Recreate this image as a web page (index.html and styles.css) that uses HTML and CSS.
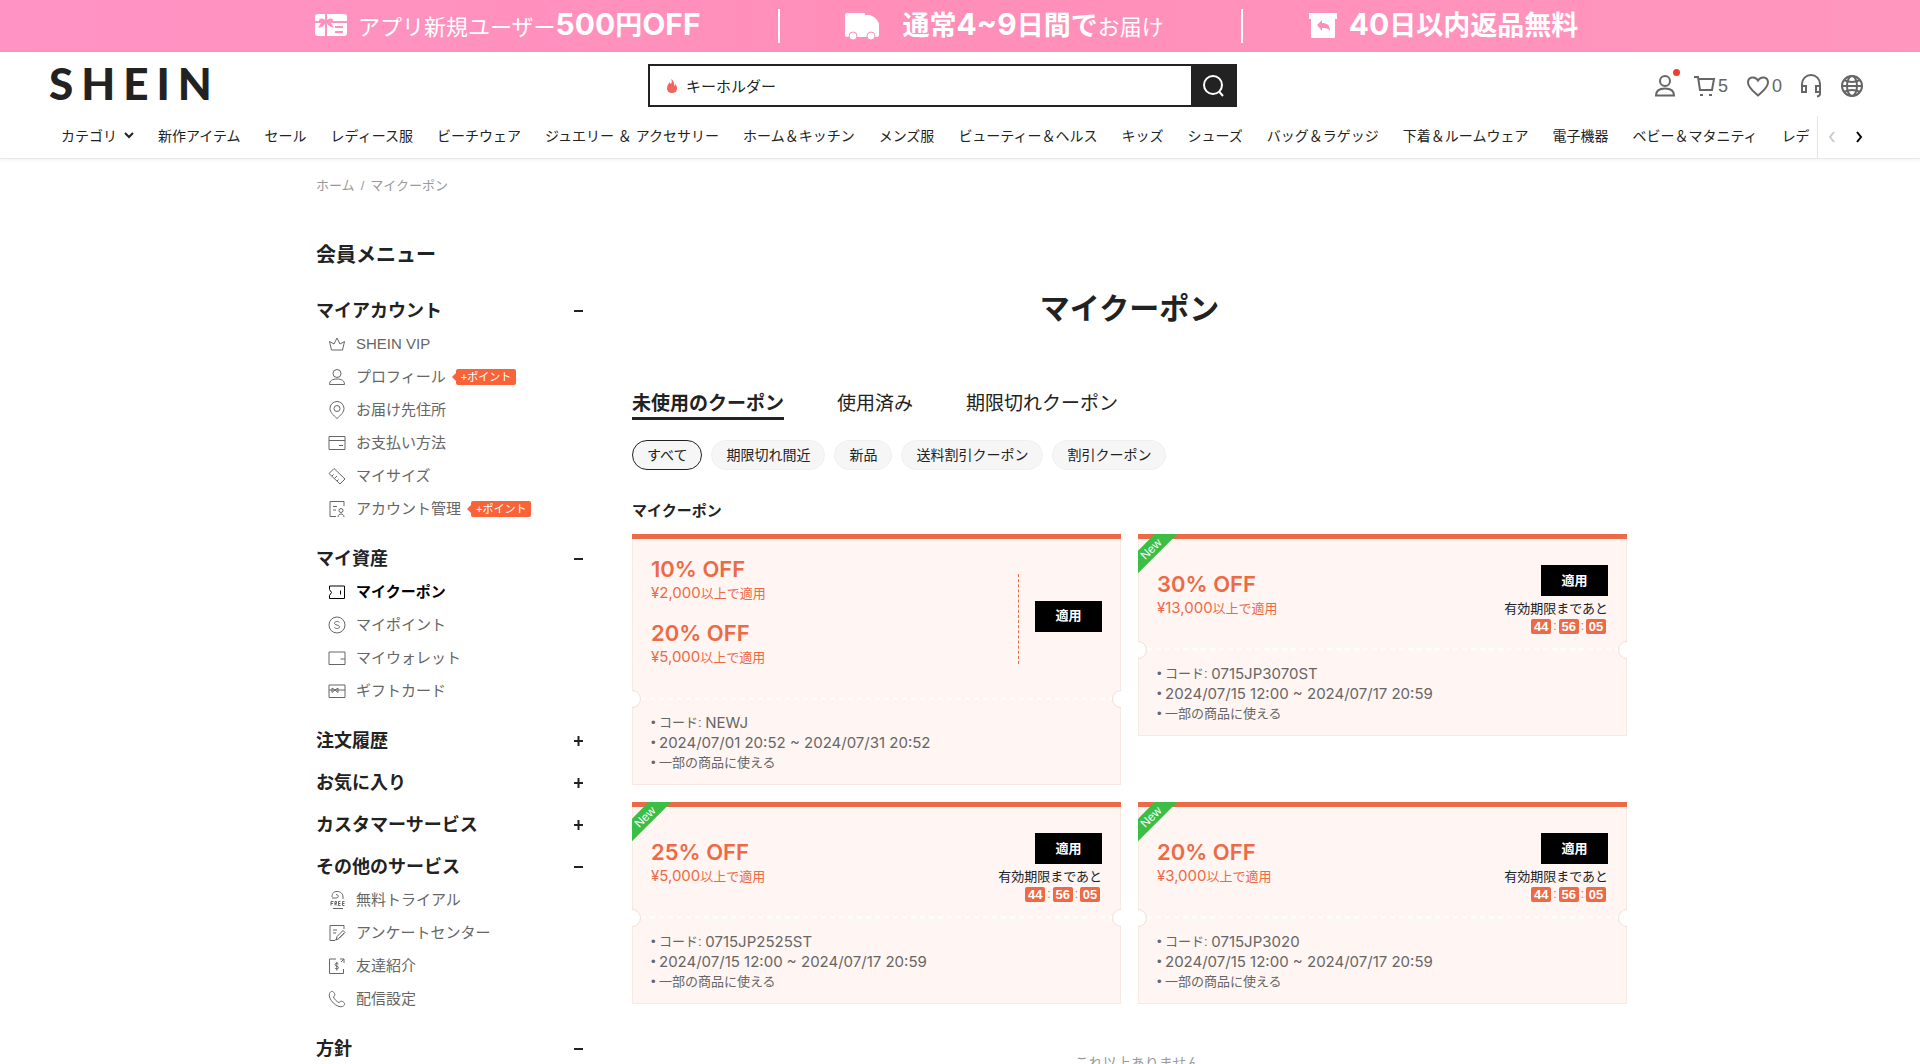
FILE: index.html
```html
<!DOCTYPE html>
<html lang="ja">
<head>
<meta charset="utf-8">
<title>マイクーポン | SHEIN</title>
<link rel="stylesheet" href="styles.css">
</head>
<body>
<div class="promo">
  <a class="promo-item" href="#">
    <svg class="promo-gift" width="32" height="24" viewBox="0 0 32 24" fill="#fff"><path d="M3 0h7v6C7 4 4 4 4 7H0V3a3 3 0 0 1 3-3zM12 0h17a3 3 0 0 1 3 3v4H18c0-3-3-3-6-1zM0 9h6l-3 5 4-1 3-3v12H3a3 3 0 0 1-3-3zM12 10l4 3 3 1-3-5h16v10a3 3 0 0 1-3 3H12z"/><path d="M20 13h8M20 18h8" stroke="#ff8fba" stroke-width="2"/></svg>
    <span class="promo-thin">アプリ新規ユーザー<b><span class="num">500</span>円<span class="num">OFF</span></b></span>
  </a>
  <i class="promo-line"></i>
  <a class="promo-item promo-wide" href="#">
    <svg width="34" height="28" viewBox="0 0 34 28" fill="#fff"><path d="M2 1h17a1 1 0 0 1 1 1v1h5c5 2 8 5 9 9v11a2 2 0 0 1-2 2H2a2 2 0 0 1-2-2V3a2 2 0 0 1 2-2z"/><circle cx="8" cy="24" r="4" stroke="#ff8fba" stroke-width="1"/><circle cx="26" cy="24" r="4" stroke="#ff8fba" stroke-width="1"/></svg>
    <span class="promo-thin"><b>通常<span class="num">4~9</span>日間で</b>お届け</span>
  </a>
  <i class="promo-line"></i>
  <a class="promo-item" href="#">
    <svg width="30" height="26" viewBox="0 0 30 26" fill="#fff"><path d="M1 0h28v6h-2v18a1 1 0 0 1-1 1H4a1 1 0 0 1-1-1V6H1z"/><path d="M9 12l5-5v3c5 0 8 2 8 8-2-3-4-3-8-3v3z" fill="#ff8fba"/></svg>
    <span class="promo-thin"><b><span class="num">40</span>日以内返品無料</b></span>
  </a>
</div>

<header class="header">
  <div class="header-top">
    <a class="logo" href="#">SHEIN</a>
    <form class="search">
      <svg width="12" height="16" viewBox="0 0 12 16"><path d="M5 1c1 2 1 3 0 5-.6-.4-1-1-1-2C2 6 1 8 1 10.500 1 13.500 3.200 15 6 15s5-1.500 5-4.500c0-2.300-1-3.500-1.800-4.500-.1 1-.5 1.600-1.200 2C8.500 5 7.500 2.500 5 1z" fill="#f36461"/></svg>
      <input class="search-input" type="text" aria-label="検索" value="キーホルダー">
      <button class="search-button" type="button" aria-label="検索する"><svg width="24" height="24" viewBox="0 0 24 24" fill="none" stroke="#fff" stroke-width="2"><circle cx="12" cy="11" r="9"/><path d="M18 17.500l4 4.500"/></svg></button>
    </form>
    <div class="tools">
      <a class="tool tool-user" href="#" aria-label="アカウント"><svg width="22" height="24" viewBox="0 0 22 24" fill="none" stroke="#666" stroke-width="2"><circle cx="11" cy="7" r="5"/><path d="M2 21.500c0-5 4-7 9-7s9 2 9 7z"/></svg><i class="dot"></i></a>
      <a class="tool tool-cart" href="#" aria-label="カート"><svg width="22" height="24" viewBox="0 0 22 24" fill="none" stroke="#666" stroke-width="2"><path d="M0 3h4l2 13h12l2-11H4.500"/><path d="M6 20h3v2H6zM15 20h3v2h-3z" fill="#666" stroke="none"/></svg><span>5</span></a>
      <a class="tool tool-wish" href="#" aria-label="お気に入り"><svg width="24" height="24" viewBox="0 0 24 24" fill="none" stroke="#666" stroke-width="2"><path d="M12 21.500C8 18 2 13.500 2 8.500 2 3 9 1.500 12 6.500c3-5 10-3.500 10 2 0 5-6 9.500-10 13z"/></svg><span>0</span></a>
      <a class="tool tool-help" href="#" aria-label="サポート"><svg width="22" height="24" viewBox="0 0 22 24" fill="none" stroke="#666" stroke-width="2"><path d="M2 17V10a9 9 0 0 1 18 0v7"/><path d="M2 12h4v6H2zM16 12h4v6h-4zM20 17v3q0 2-3 2.500"/></svg></a>
      <a class="tool" href="#" aria-label="言語"><svg width="24" height="24" viewBox="0 0 24 24" fill="none" stroke="#666" stroke-width="2"><circle cx="12" cy="12" r="10"/><ellipse cx="12" cy="12" rx="5" ry="10"/><path d="M2 12h20M4 6q8 4 16 0M4 18q8-4 16 0"/></svg></a>
    </div>
  </div>
  <nav class="nav">
    <div class="nav-list">
      <a href="#">カテゴリ<svg class="nav-caret" width="10" height="7" viewBox="0 0 10 7" fill="none" stroke="#222" stroke-width="2"><path d="M1 1l4 4 4-4"/></svg></a>
      <a href="#">新作アイテム</a><a href="#">セール</a><a href="#">レディース服</a><a href="#">ビーチウェア</a><a href="#">ジュエリー ＆ アクセサリー</a><a href="#">ホーム＆キッチン</a><a href="#">メンズ服</a><a href="#">ビューティー＆ヘルス</a><a href="#">キッズ</a><a href="#">シューズ</a><a href="#">バッグ＆ラゲッジ</a><a href="#">下着＆ルームウェア</a><a href="#">電子機器</a><a href="#">ベビー＆マタニティ</a><a href="#">レデ</a>
    </div>
    <div class="nav-arrows">
      <button type="button" aria-label="前へ"><svg width="8" height="12" viewBox="0 0 8 12" fill="none" stroke="#ccc" stroke-width="2"><path d="M6 1L2 6l4 5"/></svg></button>
      <button type="button" aria-label="次へ"><svg width="8" height="12" viewBox="0 0 8 12" fill="none" stroke="#000" stroke-width="2"><path d="M2 1l4 5-4 5"/></svg></button>
    </div>
  </nav>
</header>

<div class="page">
  <nav class="crumbs"><a href="#">ホーム</a><span>/</span><span>マイクーポン</span></nav>
  <div class="columns">
    <aside class="side">
      <h2 class="side-title">会員メニュー</h2>

      <section class="group">
        <button class="group-head" type="button">マイアカウント<svg width="10" height="10" viewBox="0 0 10 10" stroke="#222" stroke-width="2"><path d="M0 5h9"/></svg></button>
        <ul>
          <li><a href="#"><svg class="ico" viewBox="0 0 18 18"><path d="M3.500 15L1.500 6.500 6 9l3-6 3 6 4.500-2.500L14.500 15z"/></svg>SHEIN VIP</a></li>
          <li><a href="#"><svg class="ico" viewBox="0 0 18 18"><circle cx="9" cy="5.500" r="4"/><path d="M1.500 16.500c0-4 3-5.500 7.500-5.500s7.500 1.500 7.500 5.500z"/></svg>プロフィール</a><span class="tag">+ポイント</span></li>
          <li><a href="#"><svg class="ico" viewBox="0 0 18 18"><path d="M9 17.500C5 14 2 11 2 7.500a7 7 0 0 1 14 0C16 11 13 14 9 17.500z"/><circle cx="9" cy="7.500" r="3"/></svg>お届け先住所</a></li>
          <li><a href="#"><svg class="ico" viewBox="0 0 18 18"><path d="M1 2.500h16v13H1zM1 6.500h16M11 11.500h4"/></svg>お支払い方法</a></li>
          <li><a href="#"><svg class="ico" viewBox="0 0 18 18"><path d="M6 1.500L17 12l-5 5L1 6.500zM4 9l1.500-1.500M6.500 11.500L9 9M9 14l1.500-1.500"/></svg>マイサイズ</a></li>
          <li><a href="#"><svg class="ico" viewBox="0 0 18 18"><path d="M16 6V1.500H2v15h6M5 6.500h4M5 10h3"/><circle cx="13" cy="10.500" r="2"/><path d="M10 17c0-4 6-4 6 0"/></svg>アカウント管理</a><span class="tag">+ポイント</span></li>
        </ul>
      </section>

      <section class="group">
        <button class="group-head" type="button">マイ資産<svg width="10" height="10" viewBox="0 0 10 10" stroke="#222" stroke-width="2"><path d="M0 5h9"/></svg></button>
        <ul>
          <li><a class="current" href="#"><svg class="ico" viewBox="0 0 18 18"><path d="M1.500 3h15v12.500h-15v-3l2-3-2-3zM12.500 7.500v4"/></svg>マイクーポン</a></li>
          <li><a href="#"><svg class="ico" viewBox="0 0 18 18"><circle cx="9" cy="9" r="8"/><path d="M11.500 6.500C10.500 5 6.500 5 6.500 7.300c0 2.200 5 1.200 5 3.500 0 2.200-4 2.200-5.200.5"/></svg>マイポイント</a></li>
          <li><a href="#"><svg class="ico" viewBox="0 0 18 18"><path d="M1 3h16v12.500H1zM12.500 10H17"/></svg>マイウォレット</a></li>
          <li><a href="#"><svg class="ico" viewBox="0 0 18 18"><path d="M1 3h16v12.500H1zM1 8h16M4 6l3 2-3 2.500zM10 6L7 8l3 2.500z"/></svg>ギフトカード</a></li>
        </ul>
      </section>

      <section class="group"><button class="group-head" type="button">注文履歴<svg width="10" height="10" viewBox="0 0 10 10" stroke="#222" stroke-width="2"><path d="M0 5h9M4.500 0v10"/></svg></button></section>
      <section class="group"><button class="group-head" type="button">お気に入り<svg width="10" height="10" viewBox="0 0 10 10" stroke="#222" stroke-width="2"><path d="M0 5h9M4.500 0v10"/></svg></button></section>
      <section class="group"><button class="group-head" type="button">カスタマーサービス<svg width="10" height="10" viewBox="0 0 10 10" stroke="#222" stroke-width="2"><path d="M0 5h9M4.500 0v10"/></svg></button></section>

      <section class="group">
        <button class="group-head" type="button">その他のサービス<svg width="10" height="10" viewBox="0 0 10 10" stroke="#222" stroke-width="2"><path d="M0 5h9"/></svg></button>
        <ul>
          <li><a href="#"><svg class="ico" viewBox="0 0 18 18"><path d="M4 6C4 2 6 .5 9 .5c4 0 6 2.500 6 5.500v2M4 7h4c3 0 3-3.500 0-3.500M5 17.500h10M3 14.500v-4h2.500M3 12.500h2M7 14.500v-4h1.500v2H7l2 2M12.500 10.500h-2v4h2M10.500 12.500h2M16.500 10.500h-2v4h2M14.500 12.500h2"/></svg>無料トライアル</a></li>
          <li><a href="#"><svg class="ico" viewBox="0 0 18 18"><path d="M16 5V1.500H2v15h5l2-2M5 6h4M5 9h3M8 16l1-3.500 6-6 2 2-6 6zM11 14l5-5"/></svg>アンケートセンター</a></li>
          <li><a href="#"><svg class="ico" viewBox="0 0 18 18"><path d="M8 2H1.500v14.500h14V12M12 2h4v4M16 2l-3 3M10.500 7C9.500 5.800 7 6 7 7.700c0 1.800 3.500 1 3.500 2.900 0 1.700-2.800 1.700-3.700.4M8.800 5v8.500"/></svg>友達紹介</a></li>
          <li><a href="#"><svg class="ico" viewBox="0 0 18 18"><path d="M1.500 3.500C3 .5 5 .8 6.500 3.500c1 2-.5 2.500-1 3.500C6 9 9 12 11 12.500c1-.5 1.500-2 3.500-1 2.700 1.500 3 3.500 0 5C9 18.500-.5 9 1.500 3.500z"/></svg>配信設定</a></li>
        </ul>
      </section>

      <section class="group"><button class="group-head" type="button">方針<svg width="10" height="10" viewBox="0 0 10 10" stroke="#222" stroke-width="2"><path d="M0 5h9"/></svg></button></section>
    </aside>

    <main class="main">
      <h1>マイクーポン</h1>
      <div class="tabs">
        <button class="tab tab-on" type="button">未使用のクーポン</button>
        <button class="tab" type="button">使用済み</button>
        <button class="tab" type="button">期限切れクーポン</button>
      </div>
      <div class="chips">
        <button class="chip chip-on" type="button">すべて</button>
        <button class="chip" type="button">期限切れ間近</button>
        <button class="chip" type="button">新品</button>
        <button class="chip" type="button">送料割引クーポン</button>
        <button class="chip" type="button">割引クーポン</button>
      </div>
      <h2 class="list-title">マイクーポン</h2>
      <div class="coupons">
        <article class="coupon">
          <div class="coupon-top coupon-multi">
            <div class="offers">
              <div class="offer"><h3>10% OFF</h3><p><span class="fig">¥2,000</span>以上で適用</p></div>
              <div class="offer"><h3>20% OFF</h3><p><span class="fig">¥5,000</span>以上で適用</p></div>
            </div>
            <div class="action action-split"><button class="apply" type="button">適用</button></div>
          </div>
          <div class="perforation"></div>
          <ul class="terms"><li>コード: <span class="fig">NEWJ</span></li><li class="fig">2024/07/01 20:52 ~ 2024/07/31 20:52</li><li>一部の商品に使える</li></ul>
        </article>

        <article class="coupon">
          <div class="ribbon"><span>New</span></div>
          <div class="coupon-top">
            <div class="offer"><h3>30% OFF</h3><p><span class="fig">¥13,000</span>以上で適用</p></div>
            <div class="action"><button class="apply" type="button">適用</button><p>有効期限まであと</p><div class="timer"><b>44</b>:<b>56</b>:<b>05</b></div></div>
          </div>
          <div class="perforation"></div>
          <ul class="terms"><li>コード: <span class="fig">0715JP3070ST</span></li><li class="fig">2024/07/15 12:00 ~ 2024/07/17 20:59</li><li>一部の商品に使える</li></ul>
        </article>

        <article class="coupon">
          <div class="ribbon"><span>New</span></div>
          <div class="coupon-top">
            <div class="offer"><h3>25% OFF</h3><p><span class="fig">¥5,000</span>以上で適用</p></div>
            <div class="action"><button class="apply" type="button">適用</button><p>有効期限まであと</p><div class="timer"><b>44</b>:<b>56</b>:<b>05</b></div></div>
          </div>
          <div class="perforation"></div>
          <ul class="terms"><li>コード: <span class="fig">0715JP2525ST</span></li><li class="fig">2024/07/15 12:00 ~ 2024/07/17 20:59</li><li>一部の商品に使える</li></ul>
        </article>

        <article class="coupon">
          <div class="ribbon"><span>New</span></div>
          <div class="coupon-top">
            <div class="offer"><h3>20% OFF</h3><p><span class="fig">¥3,000</span>以上で適用</p></div>
            <div class="action"><button class="apply" type="button">適用</button><p>有効期限まであと</p><div class="timer"><b>44</b>:<b>56</b>:<b>05</b></div></div>
          </div>
          <div class="perforation"></div>
          <ul class="terms"><li>コード: <span class="fig">0715JP3020</span></li><li class="fig">2024/07/15 12:00 ~ 2024/07/17 20:59</li><li>一部の商品に使える</li></ul>
        </article>
      </div>
      <p class="end">これ以上ありません</p>
    </main>
  </div>
</div>
</body>
</html>
```
FILE: styles.css
```css
* { box-sizing: border-box; margin: 0; padding: 0; }
html { height: 100%; overflow: hidden; }
body {
  height: 100%;
  overflow: hidden;
  background: #fff;
  color: #222;
  font-family: "Liberation Sans", "Noto Sans CJK JP", sans-serif;
  font-size: 14px;
  line-height: 20px;
}
a { color: inherit; text-decoration: none; }
button { border: 0; background: none; font: inherit; color: inherit; cursor: pointer; }
ul { list-style: none; }
svg { display: block; flex: none; }

/* promotion strip */
.promo {
  display: flex;
  align-items: center;
  height: 52px;
  padding-left: 315px;
  background: linear-gradient(90deg, #ff93c4, #ff8fb8 50%, #ff96be);
  color: #fff;
  white-space: nowrap;
  overflow: hidden;
}
.promo-item { display: flex; align-items: center; gap: 11px; }
.promo-wide { gap: 24px; }
.promo-thin { font-size: 22px; line-height: 52px; }
.promo-thin b { font-size: 27px; }
.promo-thin .num { font-family: Inter, sans-serif; font-size: 30px; }
.promo-line { flex: none; width: 2px; height: 34px; margin: 0 65px 0 77px; background: #fff; }

/* header */
.header { border-bottom: 1px solid #e8e8e8; box-shadow: 0 1px 4px rgba(0, 0, 0, .06); }
.header-top { display: flex; align-items: center; padding: 12px 56px 0 49px; }
.logo { flex: 0 0 599px; font-family: Lato, sans-serif; font-weight: 900; font-size: 44px; line-height: 39px; padding-bottom: 4px; letter-spacing: 8px; }
.search { display: flex; align-items: center; flex: 0 1 589px; height: 43px; padding-left: 16px; border: 2px solid #222; }
.search-input { flex: 1; min-width: 0; height: 39px; padding-left: 8px; border: 0; outline: 0; font: inherit; font-size: 15px; color: #222; }
.search-button { display: flex; align-items: center; justify-content: center; width: 44px; height: 39px; background: #222; }
.tools { display: flex; align-items: center; gap: 18px; margin-left: auto; color: #666; font-size: 18px; }
.tool { display: flex; align-items: center; gap: 2px; position: relative; }
.dot { position: absolute; top: -5px; right: -4px; width: 7px; height: 7px; border-radius: 50%; background: #f33b30; }

.nav { display: flex; align-items: center; height: 51px; padding-left: 61px; }
.nav-list { display: flex; flex: 1; gap: 24px; min-width: 0; padding-top: 6px; overflow: hidden; white-space: nowrap; }
.nav-list a { display: flex; align-items: center; gap: 7px; white-space: pre; }
.nav-arrows { display: flex; align-items: center; gap: 19px; width: 103px; height: 42px; padding-left: 10px; border-left: 1px solid #e5e5e5; align-self: flex-end; }

/* page body */
.page { padding: 17px 293px 0 316px; }
.crumbs { display: flex; gap: 6px; font-size: 13px; color: #999; }
.columns { display: flex; gap: 48px; padding-top: 44px; }
.side { flex: 0 0 268px; }
.side-title { font-size: 20px; line-height: 30px; margin-bottom: 24px; }
.group { margin-bottom: 9px; }
.group ul { padding-bottom: 8px; }
.group-head { display: flex; align-items: center; justify-content: space-between; width: 100%; height: 33px; font-size: 18px; font-weight: 700; }
.group li { display: flex; align-items: center; height: 33px; padding-left: 12px; font-size: 15px; color: #666; }
.group li a { display: flex; align-items: center; gap: 10px; }
.group li .current { color: #000; font-weight: 700; }
.ico { width: 18px; height: 18px; fill: none; stroke: currentColor; stroke-width: 1; }
.tag { position: relative; margin-left: 10px; padding: 0 5px; border-radius: 2px; background: #fa6338; color: #fff; font-size: 11px; line-height: 16px; }
.tag::before { content: ""; position: absolute; left: -4px; top: 4px; border: 4px solid transparent; border-left: 0; border-right-color: #fa6338; }

.main { flex: 1; min-width: 0; }
h1 { padding-top: 47px; font-size: 30px; line-height: 44px; text-align: center; }
.tabs { display: flex; gap: 53px; margin-top: 56px; }
.tab { height: 33px; font-size: 19px; }
.tab-on { border-bottom: 3px solid #222; padding-top: 3px; font-weight: 700; }
.chips { display: flex; gap: 9px; margin-top: 20px; }
.chip { height: 30px; padding: 0 14px; border: 1px solid #f0f0f0; border-radius: 15px; background: #f6f6f6; font-size: 14px; }
.chip-on { border-color: #222; }
.list-title { margin: 31px 0 13px; font-size: 15px; line-height: 20px; }

.coupons { display: grid; grid-template-columns: 1fr 1fr; gap: 17px; align-items: start; }
.coupon { position: relative; overflow: hidden; background: #fff5f2; box-shadow: inset 0 0 0 1px #f8e9e2; }
.coupon::before { content: ""; display: block; height: 5px; background: #ec6a45; }
.coupon-top { display: flex; align-items: center; justify-content: space-between; height: 109px; padding: 2px 19px 0; }
.coupon-multi { height: 158px; }
.offers { display: grid; gap: 15px; padding-bottom: 16px; }
.offer { color: #ec6a45; }
.offer h3 { font-family: Inter, sans-serif; font-size: 22px; font-weight: 600; line-height: 28px; }
.offer p { font-size: 13px; line-height: 20px; }
.fig { font-family: Inter, sans-serif; font-size: 15px; line-height: 20px; }
.terms .fig { font-size: 15px; }
.action { display: flex; flex-direction: column; align-items: flex-end; padding-top: 10px; color: #222; }
.action p { padding-top: 3px; font-size: 13px; line-height: 20px; }
.action-split { justify-content: center; height: 90px; padding: 0 0 6px 16px; border-left: 1px dashed #ec6a45; }
.apply { width: 67px; height: 31px; background: #000; color: #fff; font-size: 13px; font-weight: 700; }
.timer { display: flex; align-items: center; gap: 2px; padding-right: 2px; color: #ec6a45; font-size: 12px; line-height: 15px; }
.timer b { width: 20px; border-radius: 2px; background: #ec6a45; color: #fff; text-align: center; font-size: 13px; }

/* tear line with a notch at each end */
.perforation { position: relative; height: 3px; margin: 0 9px; background: repeating-linear-gradient(90deg, rgba(255, 255, 255, .8) 0 5px, transparent 5px 9px); }
.perforation::before, .perforation::after { content: ""; position: absolute; top: -7px; width: 16px; height: 16px; border: 1px solid #f3e0d4; border-radius: 50%; background: #fff; }
.perforation::before { left: -18px; }
.perforation::after { right: -18px; }
.terms { padding: 13px 19px 12px; color: #666; font-size: 13px; }
.terms li { display: flex; align-items: center; height: 20px; white-space: pre; }
.terms li::before { content: "•"; width: 8px; font-family: "Liberation Sans", sans-serif; font-size: 13px; }

.ribbon { position: absolute; top: 0; left: 0; width: 42px; height: 42px; overflow: hidden; }
.ribbon span { position: absolute; top: 7px; left: -22px; width: 70px; background: #3cbd45; color: #fff; font-size: 12px; line-height: 16px; text-align: center; transform: rotate(-45deg); }
.end { padding: 49px 0 20px 16px; color: #999; text-align: center; }
```
